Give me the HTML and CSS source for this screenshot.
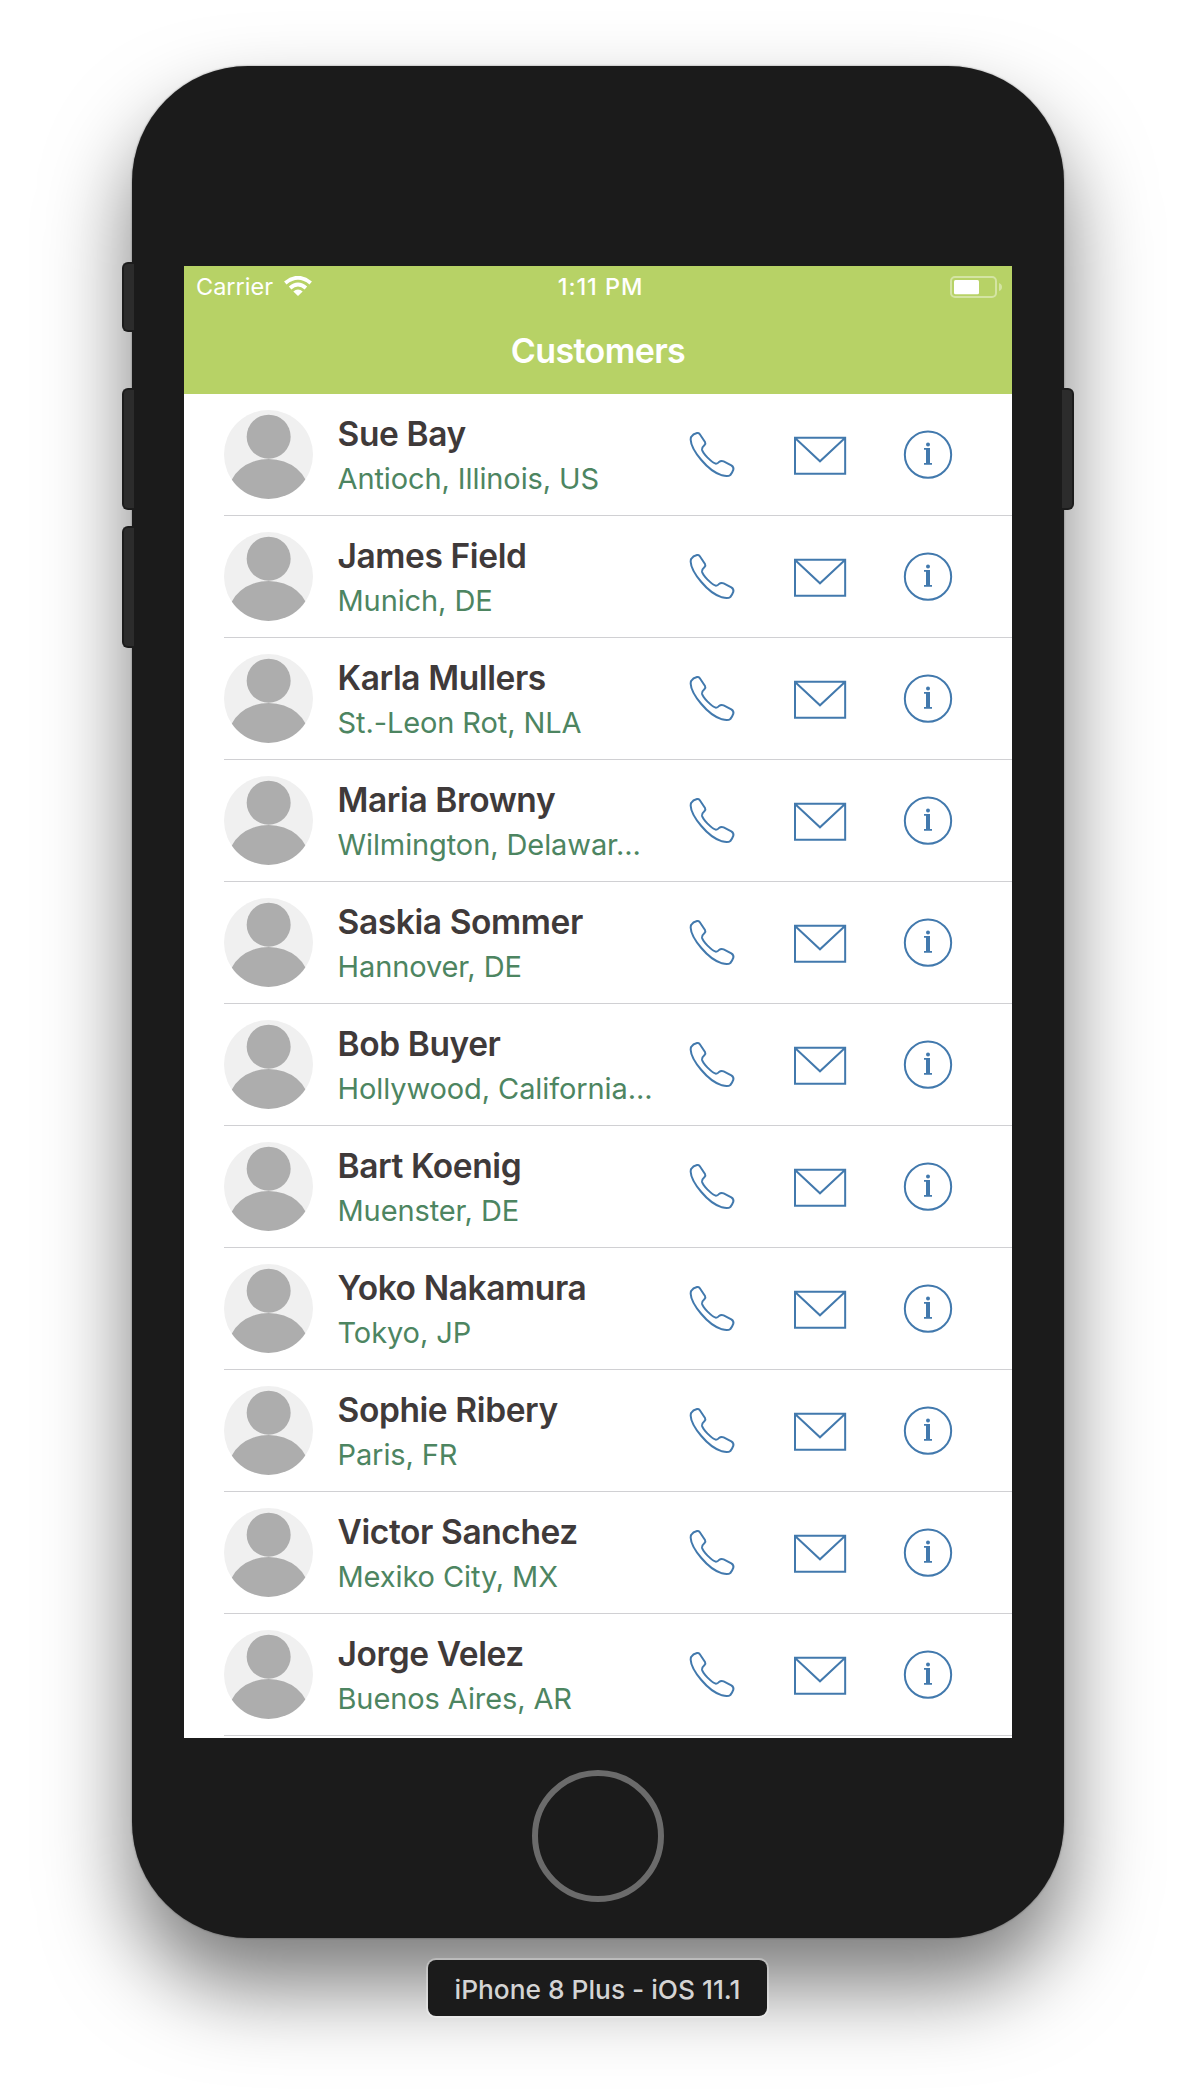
FILE: index.html
```html
<!DOCTYPE html>
<html lang="en">
<head>
<meta charset="utf-8">
<title>Customers</title>
<link rel="stylesheet" href="styles.css">
</head>
<body>
<svg class="sprite" width="0" height="0">
  <symbol id="avatar" viewBox="0 0 267 267">
    <circle cx="134" cy="80" r="66"/>
    <ellipse cx="134" cy="247" rx="119.5" ry="100"/>
  </symbol>
  <symbol id="phone" viewBox="264 510 144 144">
    <path d="M274 530Q279 522 291 519Q296 518 299 522L315 546Q318 551 313 556Q305 563 306 569Q308 577 322 592Q340 610 348 611Q353 611 357 606Q363 601 371 604L394 616Q402 621 400 629Q397 638 391 645Q384 651 366 646Q334 636 304 600Q273 563 272 539Q272 533 274 530Z"/>
  </symbol>
  <symbol id="mail" viewBox="579 510 162 144">
    <path d="M585 533H735.500V641.500H585ZM586 535L660 604L734 535"/>
  </symbol>
  <symbol id="info" viewBox="912 510 144 144">
    <circle cx="984" cy="584" r="69.500"/>
    <path class="solid" d="M972 564H990V609H996V614H972V609H978V569H972Z"/>
    <circle class="solid" cx="984" cy="553.500" r="6"/>
  </symbol>
</svg>
<div class="device">
  <span class="key mute"></span><span class="key volume-up"></span><span class="key volume-down"></span><span class="key power"></span>
  <main class="screen">
    <header class="header">
      <div class="status">
        <div class="carrier"><span>Carrier</span>
          <svg class="wifi" width="28" height="20" viewBox="0 0 28 20"><path d="M1.300 6.900Q14 -3.300 26.700 6.900M6.100 11.900Q14 5.300 21.900 11.900" fill="none" stroke="#fff" stroke-width="3.900"/><path d="M9.300 15.400Q14 11.400 18.700 15.400L14 19.900Z" fill="#fff"/></svg>
        </div>
        <span class="time">1:11 PM</span>
        <svg class="battery" width="52" height="22" viewBox="0 0 52 22"><rect x="1" y="1" width="45" height="20" rx="4" fill="none" stroke="#fff" stroke-opacity=".4" stroke-width="2"/><path d="M49 7Q52 8 52 11T49 15Z" fill="#fff" fill-opacity=".4"/><rect x="4" y="4" width="25" height="14.300" rx="1.500" fill="#fff"/></svg>
      </div>
      <h1 class="title">Customers</h1>
    </header>
    <ul class="list">
      <li class="row"><svg class="avatar"><use href="#avatar"/></svg><div class="text"><b class="name">Sue Bay</b><span class="place">Antioch, Illinois, US</span></div><svg class="icon"><use href="#phone"/></svg><svg class="icon mail"><use href="#mail"/></svg><svg class="icon"><use href="#info"/></svg></li>
      <li class="row"><svg class="avatar"><use href="#avatar"/></svg><div class="text"><b class="name">James Field</b><span class="place">Munich, DE</span></div><svg class="icon"><use href="#phone"/></svg><svg class="icon mail"><use href="#mail"/></svg><svg class="icon"><use href="#info"/></svg></li>
      <li class="row"><svg class="avatar"><use href="#avatar"/></svg><div class="text"><b class="name">Karla Mullers</b><span class="place">St.-Leon Rot, NLA</span></div><svg class="icon"><use href="#phone"/></svg><svg class="icon mail"><use href="#mail"/></svg><svg class="icon"><use href="#info"/></svg></li>
      <li class="row"><svg class="avatar"><use href="#avatar"/></svg><div class="text"><b class="name">Maria Browny</b><span class="place">Wilmington, Delawar...</span></div><svg class="icon"><use href="#phone"/></svg><svg class="icon mail"><use href="#mail"/></svg><svg class="icon"><use href="#info"/></svg></li>
      <li class="row"><svg class="avatar"><use href="#avatar"/></svg><div class="text"><b class="name">Saskia Sommer</b><span class="place">Hannover, DE</span></div><svg class="icon"><use href="#phone"/></svg><svg class="icon mail"><use href="#mail"/></svg><svg class="icon"><use href="#info"/></svg></li>
      <li class="row"><svg class="avatar"><use href="#avatar"/></svg><div class="text"><b class="name">Bob Buyer</b><span class="place">Hollywood, California...</span></div><svg class="icon"><use href="#phone"/></svg><svg class="icon mail"><use href="#mail"/></svg><svg class="icon"><use href="#info"/></svg></li>
      <li class="row"><svg class="avatar"><use href="#avatar"/></svg><div class="text"><b class="name">Bart Koenig</b><span class="place">Muenster, DE</span></div><svg class="icon"><use href="#phone"/></svg><svg class="icon mail"><use href="#mail"/></svg><svg class="icon"><use href="#info"/></svg></li>
      <li class="row"><svg class="avatar"><use href="#avatar"/></svg><div class="text"><b class="name">Yoko Nakamura</b><span class="place">Tokyo, JP</span></div><svg class="icon"><use href="#phone"/></svg><svg class="icon mail"><use href="#mail"/></svg><svg class="icon"><use href="#info"/></svg></li>
      <li class="row"><svg class="avatar"><use href="#avatar"/></svg><div class="text"><b class="name">Sophie Ribery</b><span class="place">Paris, FR</span></div><svg class="icon"><use href="#phone"/></svg><svg class="icon mail"><use href="#mail"/></svg><svg class="icon"><use href="#info"/></svg></li>
      <li class="row"><svg class="avatar"><use href="#avatar"/></svg><div class="text"><b class="name">Victor Sanchez</b><span class="place">Mexiko City, MX</span></div><svg class="icon"><use href="#phone"/></svg><svg class="icon mail"><use href="#mail"/></svg><svg class="icon"><use href="#info"/></svg></li>
      <li class="row"><svg class="avatar"><use href="#avatar"/></svg><div class="text"><b class="name">Jorge Velez</b><span class="place">Buenos Aires, AR</span></div><svg class="icon"><use href="#phone"/></svg><svg class="icon mail"><use href="#mail"/></svg><svg class="icon"><use href="#info"/></svg></li>
    </ul>
  </main>
  <div class="home"></div>
</div>
<div class="caption">iPhone 8 Plus - iOS 11.1</div>
</body>
</html>
```
FILE: styles.css
```css
* { box-sizing: border-box; }
body { margin: 0; height: 2100px; padding-top: 66px; background: #fff; font-family: Inter, "Liberation Sans", sans-serif; overflow: hidden; }
.sprite { position: absolute; }
symbol { overflow: visible; }
.device { position: relative; width: 932px; height: 1872px; margin: 0 auto; padding: 200px 52px 0; border-radius: 116px; background: #1b1b1b; box-shadow: 0 0 2px rgba(0,0,0,.45), 0 48px 86px rgba(0,0,0,.52); }
.key { position: absolute; left: -10px; width: 12px; height: 122px; background: #2c2c2c; border: 2px solid #1c1c1c; border-right: 0; border-radius: 6px 0 0 6px; }
.mute { top: 196px; height: 70px; }
.volume-up { top: 322px; }
.volume-down { top: 460px; }
.power { top: 322px; left: auto; right: -10px; transform: scaleX(-1); }
.screen { height: 1472px; background: #fff; overflow: hidden; }
.header { height: 128px; background: #b7d266; color: #fff; }
.status { display: grid; grid-template-columns: 1fr auto 1fr; align-items: center; height: 40px; padding: 0 10px 0 12px; }
.carrier { display: flex; align-items: center; gap: 11px; font-size: 23.5px; line-height: 40px; }
.carrier span { padding-top: 1px; }
.wifi { margin-top: -1px; }
.time { padding: 1px 0 0 3px; font-size: 23.5px; font-weight: 550; letter-spacing: .9px; line-height: 38px; }
.battery { justify-self: end; }
.title { margin: 0; text-align: center; font-size: 34px; font-weight: 600; letter-spacing: -.6px; line-height: 90px; }
.list { margin: 0; padding: 0 0 0 40px; list-style: none; }
.row { display: flex; align-items: center; height: 122px; padding-right: 60px; border-bottom: 1px solid #d0d0d3; }
.avatar { width: 89px; height: 89px; border-radius: 50%; background: #f0f0f0; fill: #adadad; }
.text { display: flex; flex-direction: column; width: 350.5px; margin: 0 0 0 24.5px; padding-top: 3px; white-space: nowrap; }
.name { font-size: 33.5px; font-weight: 600; letter-spacing: -.4px; line-height: 44px; color: #3f3a3a; }
.place { font-size: 29px; letter-spacing: -.1px; line-height: 45px; color: #4d8561; }
.icon { width: 48px; height: 48px; margin-bottom: 1px; overflow: visible; fill: none; stroke: #4279ad; stroke-width: 6; }
.icon + .icon { margin-left: 57px; }
.icon.mail { width: 54px; }
.solid { fill: #4279ad; stroke: none; }
.home { width: 132px; height: 132px; margin: 32px auto 0; border: 6px solid #6b6b6b; border-radius: 50%; }
.caption { position: relative; width: 339px; height: 56px; margin: 22px 0 0 428px; border-radius: 8px; background: #1b1b1b; box-shadow: 0 0 0 2px rgba(255,255,255,.3); color: #d4d4d4; text-align: center; font-size: 26.3px; font-weight: 500; line-height: 59px; }
```
